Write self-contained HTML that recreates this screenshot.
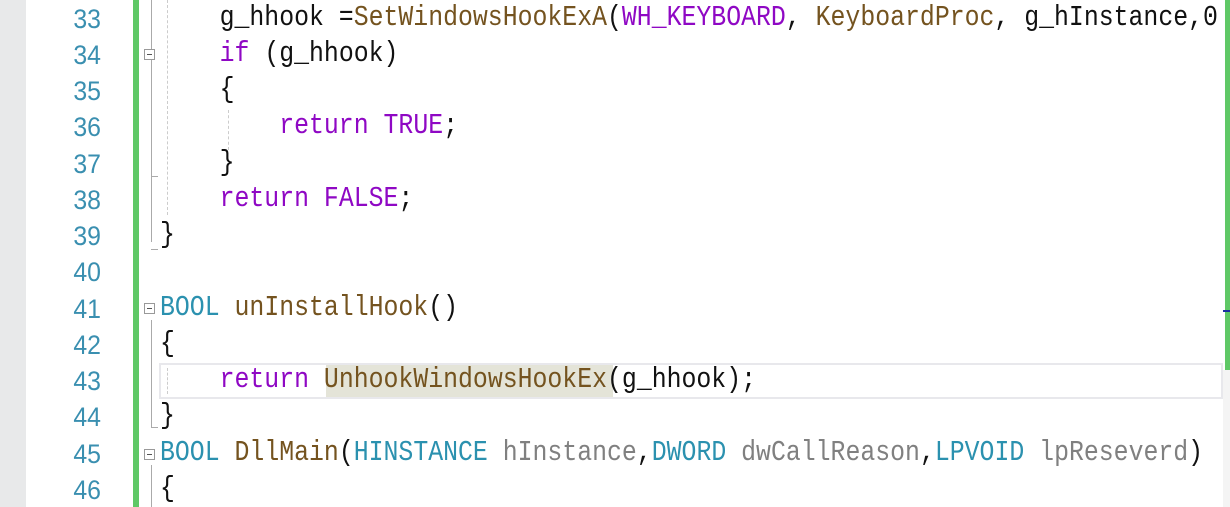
<!DOCTYPE html>
<html><head><meta charset="utf-8"><style>
html,body{margin:0;padding:0;width:1230px;height:507px;overflow:hidden;background:#fff;position:relative}
.lm{position:absolute;left:0;top:0;width:26px;height:507px;background:#e8e9ea}
.gb{position:absolute;left:133px;top:0;width:6px;height:507px;background:#5fc866}
.rb{position:absolute;left:1225px;top:0;width:5px;height:370px;background:#5fc866}
.rg{position:absolute;left:1223px;top:370px;width:7px;height:137px;background:#f4f4f4}
.bm{position:absolute;left:1223px;top:310px;width:7px;height:2px;background:#1a2fa0}
.ln{position:absolute;left:30px;width:71px;text-align:right;color:#3a8fb0;font:27px "Liberation Sans",sans-serif;line-height:36px;transform:scaleX(0.92);transform-origin:right}
.cd{position:absolute;left:160px;white-space:pre;font:24.83px "Liberation Mono",monospace;line-height:36px;color:#111;transform:scaleY(1.15);transform-origin:0 70%}
.k{color:#8f08c4}.f{color:#74531f}.t{color:#2b91af}.p{color:#808080}
.cur{position:absolute;left:159px;top:363px;width:1060px;height:32px;border:2px solid #e8e8ec}
.hl{position:absolute;left:326px;top:365px;width:287px;height:32px;background:#e4e4d8}
.fold{position:absolute;width:9px;height:9px;border:1px solid #999;background:#fff}
.fold:after{content:"";position:absolute;left:2px;top:4px;width:5px;height:1px;background:#555}
.vl{position:absolute;width:1px;background:#aaa}
.dl{position:absolute;width:0;border-left:1px dashed #ccc}
.clip{position:absolute;left:0;top:0;width:1222px;height:507px;overflow:hidden}
</style></head><body>
<div class="lm"></div><div class="gb"></div><div class="rb"></div><div class="rg"></div><div class="bm"></div>
<div class="cur"></div><div class="hl"></div>
<div class="vl" style="left:151px;top:0;height:175px"></div>
<div class="vl" style="left:151px;top:176px;width:7px;height:1px"></div>
<div class="vl" style="left:151px;top:62px;height:180px"></div>
<div class="vl" style="left:151px;top:249px;width:7px;height:1px"></div>
<div class="vl" style="left:151px;top:320px;height:108px"></div>
<div class="vl" style="left:151px;top:427px;width:7px;height:1px"></div>
<div class="vl" style="left:151px;top:465px;height:42px"></div>
<div class="dl" style="left:167px;top:0;height:215px"></div>
<div class="dl" style="left:228px;top:110px;height:40px"></div>
<div class="dl" style="left:167px;top:368px;height:26px"></div>
<div class="fold" style="left:144px;top:49px"></div>
<div class="fold" style="left:144px;top:303px"></div>
<div class="fold" style="left:144px;top:449px"></div>
<div class="ln" style="top:1px">33</div><div class="ln" style="top:37px">34</div><div class="ln" style="top:73px">35</div><div class="ln" style="top:109px">36</div><div class="ln" style="top:146px">37</div><div class="ln" style="top:182px">38</div><div class="ln" style="top:218px">39</div><div class="ln" style="top:254px">40</div><div class="ln" style="top:291px">41</div><div class="ln" style="top:327px">42</div><div class="ln" style="top:363px">43</div><div class="ln" style="top:399px">44</div><div class="ln" style="top:436px">45</div><div class="ln" style="top:472px">46</div>
<div class="clip">
<div class="cd" style="top:1px">    g_hhook =<span class="f">SetWindowsHookExA</span>(<span class="k">WH_KEYBOARD</span>, <span class="f">KeyboardProc</span>, g_hInstance,0</div>
<div class="cd" style="top:37px">    <span class="k">if</span> (g_hhook)</div>
<div class="cd" style="top:73px">    {</div>
<div class="cd" style="top:109px">        <span class="k">return</span> <span class="k">TRUE</span>;</div>
<div class="cd" style="top:146px">    }</div>
<div class="cd" style="top:182px">    <span class="k">return</span> <span class="k">FALSE</span>;</div>
<div class="cd" style="top:218px">}</div>
<div class="cd" style="top:291px"><span class="t">BOOL</span> <span class="f">unInstallHook</span>()</div>
<div class="cd" style="top:327px">{</div>
<div class="cd" style="top:363px">    <span class="k">return</span> <span class="f">UnhookWindowsHookEx</span>(g_hhook);</div>
<div class="cd" style="top:399px">}</div>
<div class="cd" style="top:436px"><span class="t">BOOL</span> <span class="f">DllMain</span>(<span class="t">HINSTANCE</span> <span class="p">hInstance</span>,<span class="t">DWORD</span> <span class="p">dwCallReason</span>,<span class="t">LPVOID</span> <span class="p">lpReseverd</span>)</div>
<div class="cd" style="top:472px">{</div>
</div>
</body></html>
